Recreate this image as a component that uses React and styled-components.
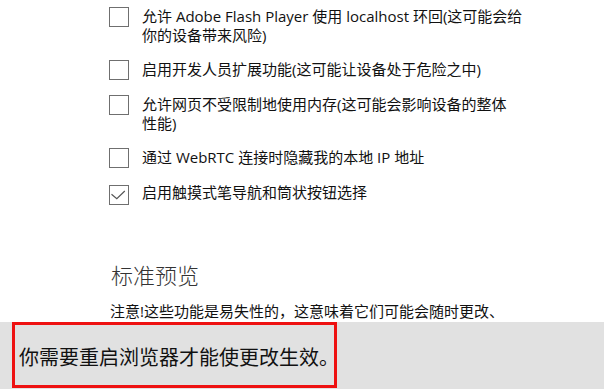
import { createGlobalStyle, styled } from "styled-components";

const GlobalStyle = createGlobalStyle`
  html, body {
    margin: 0;
    padding: 0;
    background: #ffffff;
  }

  body {
    font-family: "Open Sans", "Noto Sans CJK SC", "Noto Sans", sans-serif;
    color: #000000;
  }
`;

const Page = styled.div`
  width: 604px;
  height: 389px;
  display: flex;
  flex-direction: column;
  overflow: hidden;
`;

const Main = styled.div`
  flex: 1;
  overflow: hidden;
  padding: 7px 0 0 109px;
`;

const OptionList = styled.div`
  display: flex;
  flex-direction: column;
  gap: 15px;
`;

const Option = styled.label`
  display: flex;
  align-items: flex-start;
  gap: 13px;
`;

const Box = styled.span`
  flex-shrink: 0;
  box-sizing: border-box;
  width: 20px;
  height: 20px;
  margin-top: ${(p) => (p.$checked ? "2px" : "0")};
  border: 1.5px solid #6f6f6f;
  display: flex;
  align-items: center;
  justify-content: center;
`;

const TextLines = styled.span`
  display: flex;
  flex-direction: column;
  font-size: 15px;
  line-height: 19px;
  color: #111111;
  white-space: nowrap;
`;

const Heading = styled.h2`
  margin: 55px 0 0 2px;
  font-size: 22px;
  font-weight: 300;
  line-height: 30px;
  color: #333333;
`;

const Note = styled(TextLines)`
  margin: 12px 0 0 1px;
`;

const Footer = styled.div`
  height: 67px;
  flex-shrink: 0;
  background: #e1e1e1;
  padding-left: 12px;
`;

const Highlight = styled.div`
  box-sizing: border-box;
  width: 325px;
  height: 66px;
  border: 3px solid #ee1111;
  padding: 19px 0 0 4px;
  font-size: 20px;
  line-height: 28px;
  color: #111111;
  white-space: nowrap;
`;

function Checkbox({ checked }) {
  return (
    <Box $checked={checked}>
      {checked && (
        <svg width="18" height="18" viewBox="0 0 18 18">
          <path
            d="M1.5 8.2 L6.8 12.6 L14.8 5"
            fill="none"
            stroke="#555"
            strokeWidth="1.2"
          />
        </svg>
      )}
    </Box>
  );
}

const options = [
  { lines: ["允许 Adobe Flash Player 使用 localhost 环回(这可能会给", "你的设备带来风险)"], checked: false },
  { lines: ["启用开发人员扩展功能(这可能让设备处于危险之中)"], checked: false },
  { lines: ["允许网页不受限制地使用内存(这可能会影响设备的整体", "性能)"], checked: false },
  { lines: ["通过 WebRTC 连接时隐藏我的本地 IP 地址"], checked: false },
  { lines: ["启用触摸式笔导航和筒状按钮选择"], checked: true },
];

const noteLines = ["注意!这些功能是易失性的，这意味着它们可能会随时更改、", "删除或中断。"];

export default function App() {
  return (
    <>
      <GlobalStyle />
      <Page>
        <Main>
          <OptionList>
            {options.map((o) => (
              <Option key={o.lines[0]}>
                <Checkbox checked={o.checked} />
                <TextLines>
                  {o.lines.map((l) => (
                    <span key={l}>{l}</span>
                  ))}
                </TextLines>
              </Option>
            ))}
          </OptionList>
          <Heading>标准预览</Heading>
          <Note as="p">
            {noteLines.map((l) => (
              <span key={l}>{l}</span>
            ))}
          </Note>
        </Main>
        <Footer>
          <Highlight>你需要重启浏览器才能使更改生效。</Highlight>
        </Footer>
      </Page>
    </>
  );
}
